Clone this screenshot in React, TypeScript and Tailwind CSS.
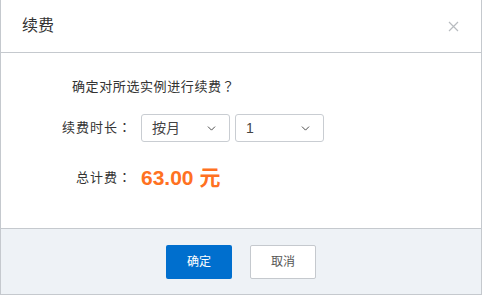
import { ChevronDown } from 'lucide-react';

const font = { fontFamily: '"Liberation Sans", "Noto Sans CJK JP", sans-serif' };

function Select({ value, width }: { value: string; width: string }) {
  return (
    <div
      className={`flex h-[28px] ${width} items-center justify-between rounded-[3px] border border-[#c9cdd2] bg-white pl-[10px] pr-[11px] text-[14px] text-[#444]`}
    >
      <span>{value}</span>
      <ChevronDown size={13} strokeWidth={1.6} className="text-[#333]" />
    </div>
  );
}

export default function App() {
  return (
    <div
      style={font}
      className="flex h-[295px] w-[482px] flex-col border-x border-b border-[#c5c9ce] bg-white text-[#333]"
    >
      <div className="flex h-[53px] shrink-0 items-center justify-between border-b border-[#c5c9ce] pl-[21px] pr-[22px]">
        <span className="text-[16px] text-[#333]">续费</span>
        <svg width="11" height="11" viewBox="0 0 11 11" className="text-[#b8bcc0]">
          <path d="M1 1L10 10M10 1L1 10" stroke="currentColor" strokeWidth="1.2" />
        </svg>
      </div>

      <div className="flex flex-1 flex-col pt-[25px]">
        <div className="pl-[71px] text-[13px] leading-[18px] tracking-[0.6px]">确定对所选实例进行续费？</div>

        <div className="mt-[18px] flex items-center">
          <div className="w-[131px] text-right text-[13px] tracking-[1px]">续费时长：</div>
          <div className="ml-[9px] flex gap-[5px]">
            <Select value="按月" width="w-[89px]" />
            <Select value="1" width="w-[89px]" />
          </div>
        </div>

        <div className="mt-[20px] flex items-center">
          <div className="w-[131px] text-right text-[13px] tracking-[1px]">总计费：</div>
          <div className="ml-[9px] text-[21px] font-bold text-[#ff7121]">63.00 元</div>
        </div>
      </div>

      <div className="flex h-[66px] shrink-0 items-center justify-center gap-[18px] border-t border-[#c5c9ce] bg-[#eef2f6]">
        <button className="h-[34px] w-[66px] rounded-[2px] bg-[#006fce] text-[12px] text-white">确定</button>
        <button className="h-[34px] w-[66px] rounded-[2px] border border-[#c5c9ce] bg-white text-[12px] text-[#555]">
          取消
        </button>
      </div>
    </div>
  );
}
